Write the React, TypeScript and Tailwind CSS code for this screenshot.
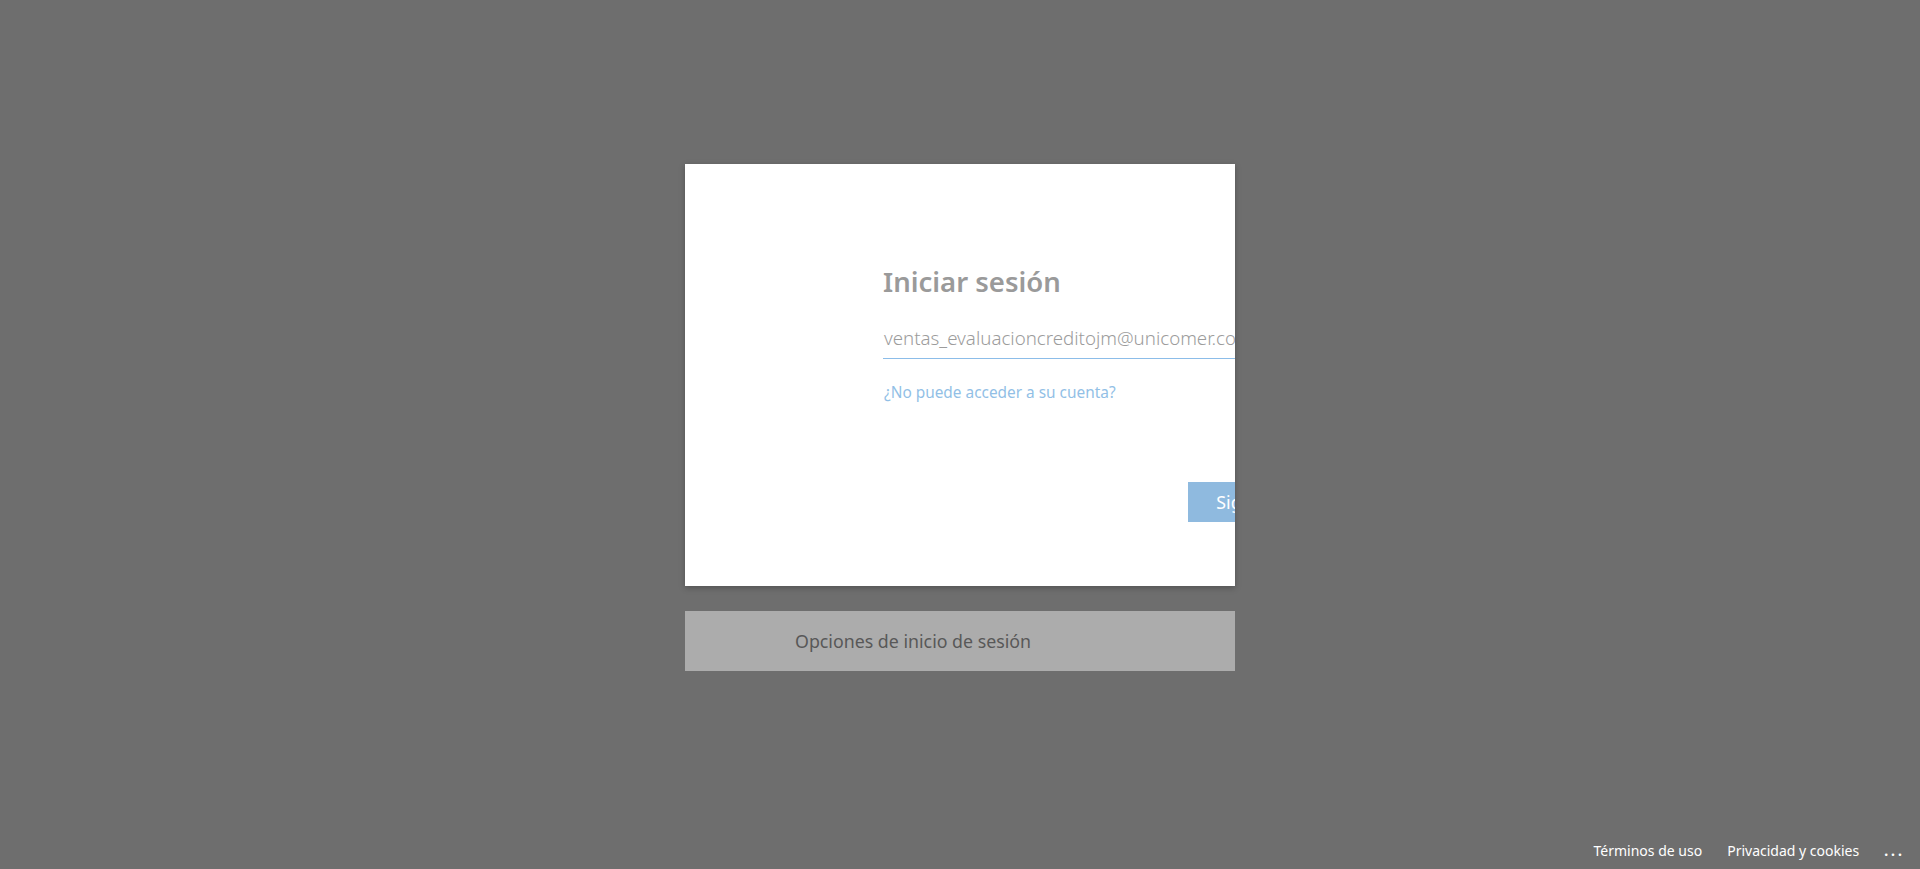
import React from "react";

export default function App() {
  return (
    <div className="relative flex h-[869px] w-full flex-col bg-[#6e6e6e] font-['Noto_Sans',sans-serif]">
      <div className="mx-auto mt-[164px] h-[422px] w-[550px] overflow-hidden bg-white pl-[198px] shadow-[0_2px_6px_rgba(0,0,0,0.25)]">
        <div className="w-[440px] shrink-0">
          <div className="mt-[100px] h-[36px] text-[27.5px] font-semibold leading-[36px] text-[#9a9a9a]">
            Iniciar sesión
          </div>
          <div className="mt-[21px] h-[38px] border-b border-[#8cbde9] pl-[1px] text-[18.7px] font-light leading-[33px] text-[#9c9c9c]">
            ventas_evaluacioncreditojm@unicomer.com
          </div>
          <div className="mt-[23px] h-[20px] pl-[1px] text-[15.4px] leading-[21px] text-[#92bfe6]">
            ¿No puede acceder a su cuenta?
          </div>
          <div className="mt-[80px] flex justify-end">
            <div className="flex h-[40px] w-[135px] items-center justify-center bg-[#8fbadf] text-[17.8px] text-white">
              Siguiente
            </div>
          </div>
        </div>
      </div>

      <div className="mx-auto mt-[25px] flex h-[60px] w-[550px] items-center bg-[#acacac] pl-[110px] text-[17.8px] text-[#585858]">
        Opciones de inicio de sesión
      </div>

      <div className="mt-auto flex items-center justify-end gap-[25px] pb-[8px] pr-[15px] text-[14px] leading-[20px] text-white">
        <span>Términos de uso</span>
        <span>Privacidad y cookies</span>
        <span className="font-bold tracking-[3px]">...</span>
      </div>
    </div>
  );
}
